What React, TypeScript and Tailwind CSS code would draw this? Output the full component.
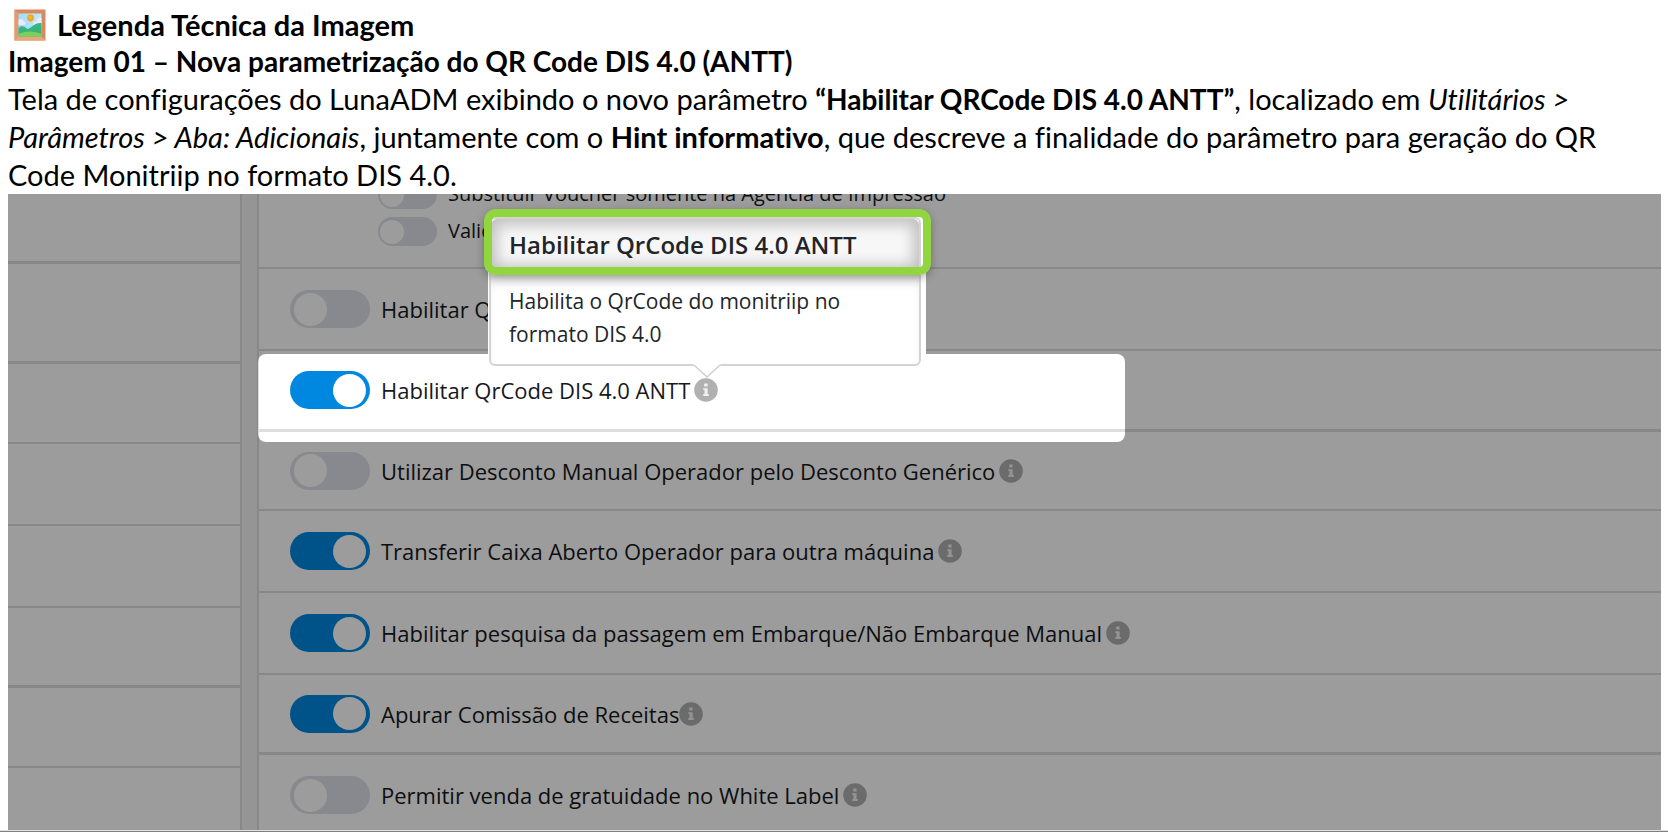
import React, { useId } from "react";

function PictureIcon() {
  return (
    <svg viewBox="0 0 32 32" className="h-8 w-8 shrink-0" aria-hidden="true">
      <defs>
        <linearGradient id="sky" x1="0" y1="0" x2="1" y2="0">
          <stop offset="0" stopColor="#9fdcfb" />
          <stop offset="1" stopColor="#c3e9fc" />
        </linearGradient>
        <linearGradient id="hill" x1="0" y1="0" x2="0" y2="1">
          <stop offset="0" stopColor="#35b98a" />
          <stop offset="1" stopColor="#3fae6c" />
        </linearGradient>
      </defs>
      <rect x="0.5" y="0.5" width="31" height="31" fill="#d9895f" />
      <path d="M.5.5 4.500 4.500v23L.5 31.500z" fill="#e39a72" />
      <path d="M.5 31.500l4-4h23l4 4z" fill="#e8a57e" />
      <rect x="4.500" y="4.500" width="23" height="23" fill="url(#sky)" />
      <path d="M4.500 11c2-2 5-1 5 1 2 0 3 3 1 4h-6z" fill="#ece9fb" />
      <path d="M27.500 9c-3-1-5 1-5 3-3 0-4 3-3 5h8z" fill="#ece9fb" />
      <circle cx="16.500" cy="9" r="3.400" fill="#f3a51f" />
      <circle cx="16" cy="8.300" r="1.800" fill="#fbb731" />
      <path d="M4.500 19c3-3 6-2 9 1 4-1 7-7 14-6v13.500h-23z" fill="url(#hill)" />
      <path d="M4.500 25c5-3.500 17-3.500 23 0v2.500h-23z" fill="#7ccf5c" />
    </svg>
  );
}

function InfoIcon() {
  return (
    <svg viewBox="0 0 24 24" className="h-6 w-6" aria-hidden="true">
      <circle cx="12" cy="12" r="11.800" fill="#b0b0b0" />
      <path d="M10.200 5.600h3.400v2.800h-3.400zM9.300 10.200h4.300v5.900h1.200V18H9.300v-1.900h1.200v-4H9.300z" fill="#f0f0f0" />
    </svg>
  );
}

type SettingProps = {
  label: string;
  checked?: boolean;
  info?: boolean;
  tight?: boolean;
  className: string;
  children?: React.ReactNode;
};

function Setting({ label, checked = false, info = true, tight = false, className, children }: SettingProps) {
  const id = useId();
  return (
    <li className={`relative flex shrink-0 items-center border-[#dedede] pl-[31px] ${className}`}>
      <input
        id={id}
        type="checkbox"
        defaultChecked={checked}
        className="flex h-[38px] w-20 shrink-0 appearance-none items-center rounded-full bg-[#dee0e8] px-1 before:h-[33px] before:w-[33px] before:rounded-full before:bg-white checked:justify-end checked:bg-[#0088e0]"
      />
      <label htmlFor={id} className="ml-[11px] text-[22px] leading-8 whitespace-nowrap">
        {label}
      </label>
      {info && (
        <button type="button" aria-label={`Ajuda: ${label}`} className={tight ? "" : "ml-1"}>
          <InfoIcon />
        </button>
      )}
      {children}
    </li>
  );
}

function SubSetting({ label }: { label: string }) {
  const id = useId();
  return (
    <div className="flex h-[37px] items-center">
      <input
        id={id}
        type="checkbox"
        className="flex h-[29px] w-[59px] shrink-0 appearance-none items-center rounded-full bg-[#dee0e8] px-0.5 before:h-6 before:w-6 before:rounded-full before:bg-white checked:justify-end checked:bg-[#0088e0]"
      />
      <label htmlFor={id} className="ml-[11px] pb-0.5 text-xl leading-8 whitespace-nowrap">
        {label}
      </label>
    </div>
  );
}

function Hint() {
  return (
    <>
      <div className="absolute bottom-[75px] left-[229px] z-10 h-[138px] w-[438px] bg-white" />
      <div
        role="tooltip"
        className="absolute bottom-[63px] left-[230px] z-20 w-[432px] rounded-md border-2 border-[#d4d4d4] bg-white text-[#212529]"
      >
        <div className="flex h-[52px] items-center rounded-t-md bg-[#f7f7f7] px-[18px] text-2xl font-semibold whitespace-nowrap shadow-[inset_0_0_14px_6px_rgba(0,0,0,0.22)]">
          Habilitar QrCode DIS 4.0 ANTT
        </div>
        <p className="px-[18px] pt-3.5 pb-[13px] text-[21px] leading-[33px] shadow-[inset_0_16px_14px_-8px_rgba(0,0,0,0.18)]">
          Habilita o QrCode do monitriip no
          <br />
          formato DIS 4.0
        </p>
        <svg viewBox="0 0 28 14" className="absolute top-full left-[202px] h-3.5 w-7" aria-hidden="true">
          <path d="M0 0h28L14 13z" fill="#fff" />
          <path d="M1 1l13 12L27 1" fill="none" stroke="#cfcfcf" strokeWidth="1.500" />
        </svg>
        <div className="absolute -top-2.5 -left-[7px] h-[66px] w-[447px] rounded-xl border-8 border-[#92d63f] shadow-[0_3px_8px_rgba(0,0,0,0.3)]" />
      </div>
    </>
  );
}

export default function App() {
  return (
    <main className="bg-white font-['Lato',sans-serif] text-black">
      <header className="pt-1.5 pl-2 text-[29px] [font-variant-ligatures:none]">
        <h1 className="flex h-[37px] items-center gap-[11px] pl-1.5 leading-[37px] font-bold">
          <PictureIcon />
          Legenda Técnica da Imagem
        </h1>
        <h2 className="text-[28px] leading-[37px] font-bold">Imagem 01 – Nova parametrização do QR Code DIS 4.0 (ANTT)</h2>
        <p className="leading-[38px] whitespace-nowrap">
          Tela de configurações do LunaADM exibindo o novo parâmetro{" "}
          <b className="text-[28px]">“Habilitar QRCode DIS 4.0 ANTT”</b>, localizado em <i>Utilitários &gt;</i>
          <br />
          <i>Parâmetros &gt; Aba: Adicionais</i>, juntamente com o <b>Hint informativo</b>, que descreve a finalidade do
          parâmetro para geração do QR
          <br />
          Code Monitriip no formato DIS 4.0.
        </p>
      </header>

      <section className="mr-[7px] ml-2 flex h-[636px] overflow-hidden bg-[#f3f3f3] font-['Open_Sans',sans-serif] text-[#16181b]">
        <div className="flex w-[234px] shrink-0 flex-col border-r-2 border-[#dedede] bg-white">
          <div className="h-[70px] border-b-3 border-[#dedede]" />
          <div className="h-[100px] border-b-3 border-[#dedede]" />
          <div className="h-20 border-b-2 border-[#dedede]" />
          <div className="h-[82px] border-b-2 border-[#dedede]" />
          <div className="h-[82px] border-b-2 border-[#dedede]" />
          <div className="h-20 border-b-3 border-[#dedede]" />
          <div className="h-20 border-b-2 border-[#dedede]" />
        </div>
        <ul className="ml-[15px] flex min-w-0 flex-1 flex-col border-l-2 border-[#dedede] bg-white">
          <li className="h-[75px] shrink-0 border-b-2 border-[#dedede] pl-[119px]">
            <div className="-mt-[18px]">
              <SubSetting label="Substituir Voucher somente na Agência de Impressão" />
              <SubSetting label="Valid" />
            </div>
          </li>
          <Setting className="h-[82px] border-b-2" label="Habilitar Q" info={false} />
          <Setting className="h-[81px] border-b-3" label="Habilitar QrCode DIS 4.0 ANTT" checked>
            <div className="pointer-events-none absolute top-[3px] -left-px z-10 h-[88px] w-[867px] rounded-lg shadow-[0_0_0_2000px_rgba(0,0,0,0.39)]" />
            <Hint />
          </Setting>
          <Setting className="h-[79px] border-b-2" label="Utilizar Desconto Manual Operador pelo Desconto Genérico" />
          <Setting className="h-[82px] border-b-2" label="Transferir Caixa Aberto Operador para outra máquina" checked />
          <Setting
            className="h-[82px] border-b-2"
            label="Habilitar pesquisa da passagem em Embarque/Não Embarque Manual"
            checked
          />
          <Setting className="h-20 border-b-3" label="Apurar Comissão de Receitas" checked tight />
          <Setting className="h-20" label="Permitir venda de gratuidade no White Label" />
        </ul>
      </section>
      <hr className="h-0.5 border-t border-b border-t-[#e0e0e0] border-b-[#808080]" />
    </main>
  );
}
